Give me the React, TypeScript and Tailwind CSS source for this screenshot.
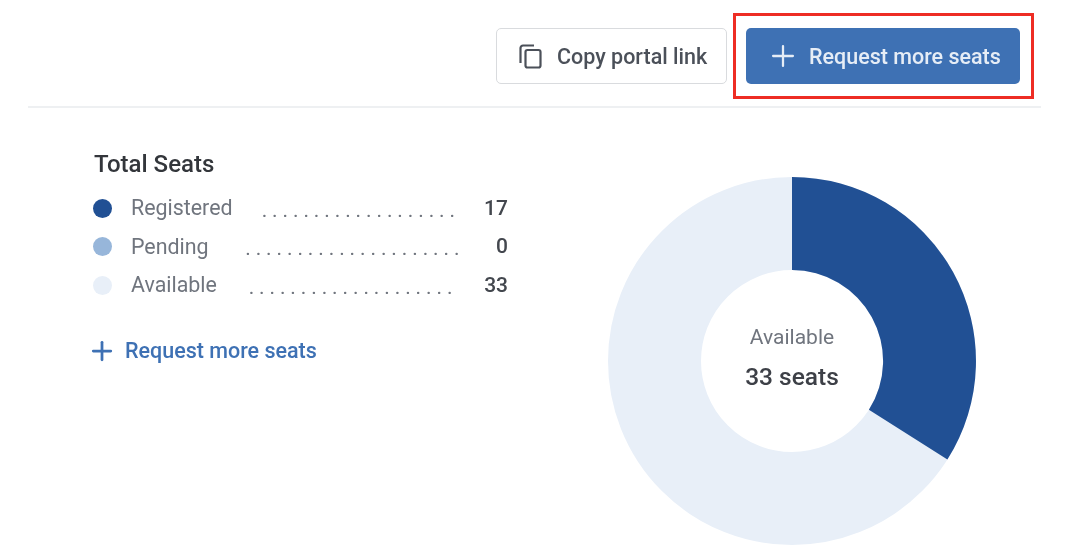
import { Plus } from 'lucide-react';

const rows = [
  { label: 'Registered', value: 17, dot: 'bg-[#215094]', dots: 19 },
  { label: 'Pending', value: 0, dot: 'bg-[#97b6da]', dots: 21 },
  { label: 'Available', value: 33, dot: 'bg-[#e8eff8]', dots: 20 },
];

function CopyIcon() {
  return (
    <svg width="23" height="25" viewBox="0 0 23 25" fill="none" stroke="#4b5059" strokeWidth="2.2" className="shrink-0">
      <path d="M15 1.5H4a2.5 2.5 0 0 0-2.5 2.5v15" />
      <rect x="6.5" y="6" width="15" height="17.5" rx="2" />
    </svg>
  );
}

function Donut() {
  return (
    <svg width="370" height="370" viewBox="0 0 370 370" className="shrink-0">
      <circle cx="185" cy="185" r="137.5" fill="none" stroke="#e8eff8" strokeWidth="93" />
      <path d="M185 1 A184 184 0 0 1 340.4 283.5 L261.9 233.8 A91 91 0 0 0 185 94 Z" fill="#215094" />
    </svg>
  );
}

export default function App() {
  return (
    <div className="w-[1074px] h-[558px] overflow-hidden bg-white font-['Roboto',sans-serif] blur-[0.5px]">
      <div className="ml-[28px] mr-[33px] h-[108px] border-b-2 border-[#eef0f2] pt-[13px]">
        <div className="flex items-center justify-end gap-[6px] pr-[7px]">
          <button className="flex h-[56px] w-[231px] items-center gap-[15px] rounded-[5px] border border-[#d9dbde] bg-white pl-[22px] text-[21.5px] font-medium text-[#4b5059]">
            <CopyIcon />
            <span className="pt-[3px]">Copy portal link</span>
          </button>
          <div className="border-[3px] border-[#ee2d24] p-[12px_11px_12px_10px]">
            <button className="flex h-[56px] w-[274px] items-center gap-[9px] rounded-[5px] bg-[#3e71b4] pl-[20px] text-[21.5px] font-medium text-[#e6edf6]">
              <Plus className="h-[34px] w-[34px]" strokeWidth={1.6} />
              <span className="pt-[3px]">Request more seats</span>
            </button>
          </div>
        </div>
      </div>

      <div className="flex items-start pl-[93px] pt-[41px]">
        <div className="w-[415px]">
          <h2 className="pl-[1px] text-[24px] leading-[30px] font-medium text-[#33363b]">Total Seats</h2>
          <div className="mt-[10px] flex flex-col">
            {rows.map(r => (
              <div key={r.label} className="flex h-[38.5px] items-center justify-between">
                <div className="flex items-center">
                  <span className={`h-[19px] w-[19px] rounded-full ${r.dot}`} />
                  <span className="ml-[19px] text-[21.4px] text-[#70757e]">{r.label}</span>
                </div>
                <span className="pl-[5px] text-[21px] leading-none tracking-[4.9px] text-[#70757e] translate-y-[2px]">
                  {'.'.repeat(r.dots)}
                </span>
                <span className="text-[21px] font-medium text-[#43474e]">{r.value}</span>
              </div>
            ))}
          </div>
          <a className="mt-[30px] flex items-center gap-[8px] text-[21.5px] font-medium text-[#3e71b4]">
            <Plus className="h-[30px] w-[30px] -ml-[6px]" strokeWidth={2.2} />
            <span>Request more seats</span>
          </a>
        </div>

        <div className="relative ml-[99px] mt-[27px]">
          <Donut />
          <div className="absolute inset-0 flex flex-col items-center justify-center pb-[8px]">
            <span className="text-[21px] leading-[30px] text-[#70757e]">Available</span>
            <span className="mt-[10px] text-[24.5px] leading-[30px] font-medium text-[#3d4047]">33 seats</span>
          </div>
        </div>
      </div>
    </div>
  );
}
